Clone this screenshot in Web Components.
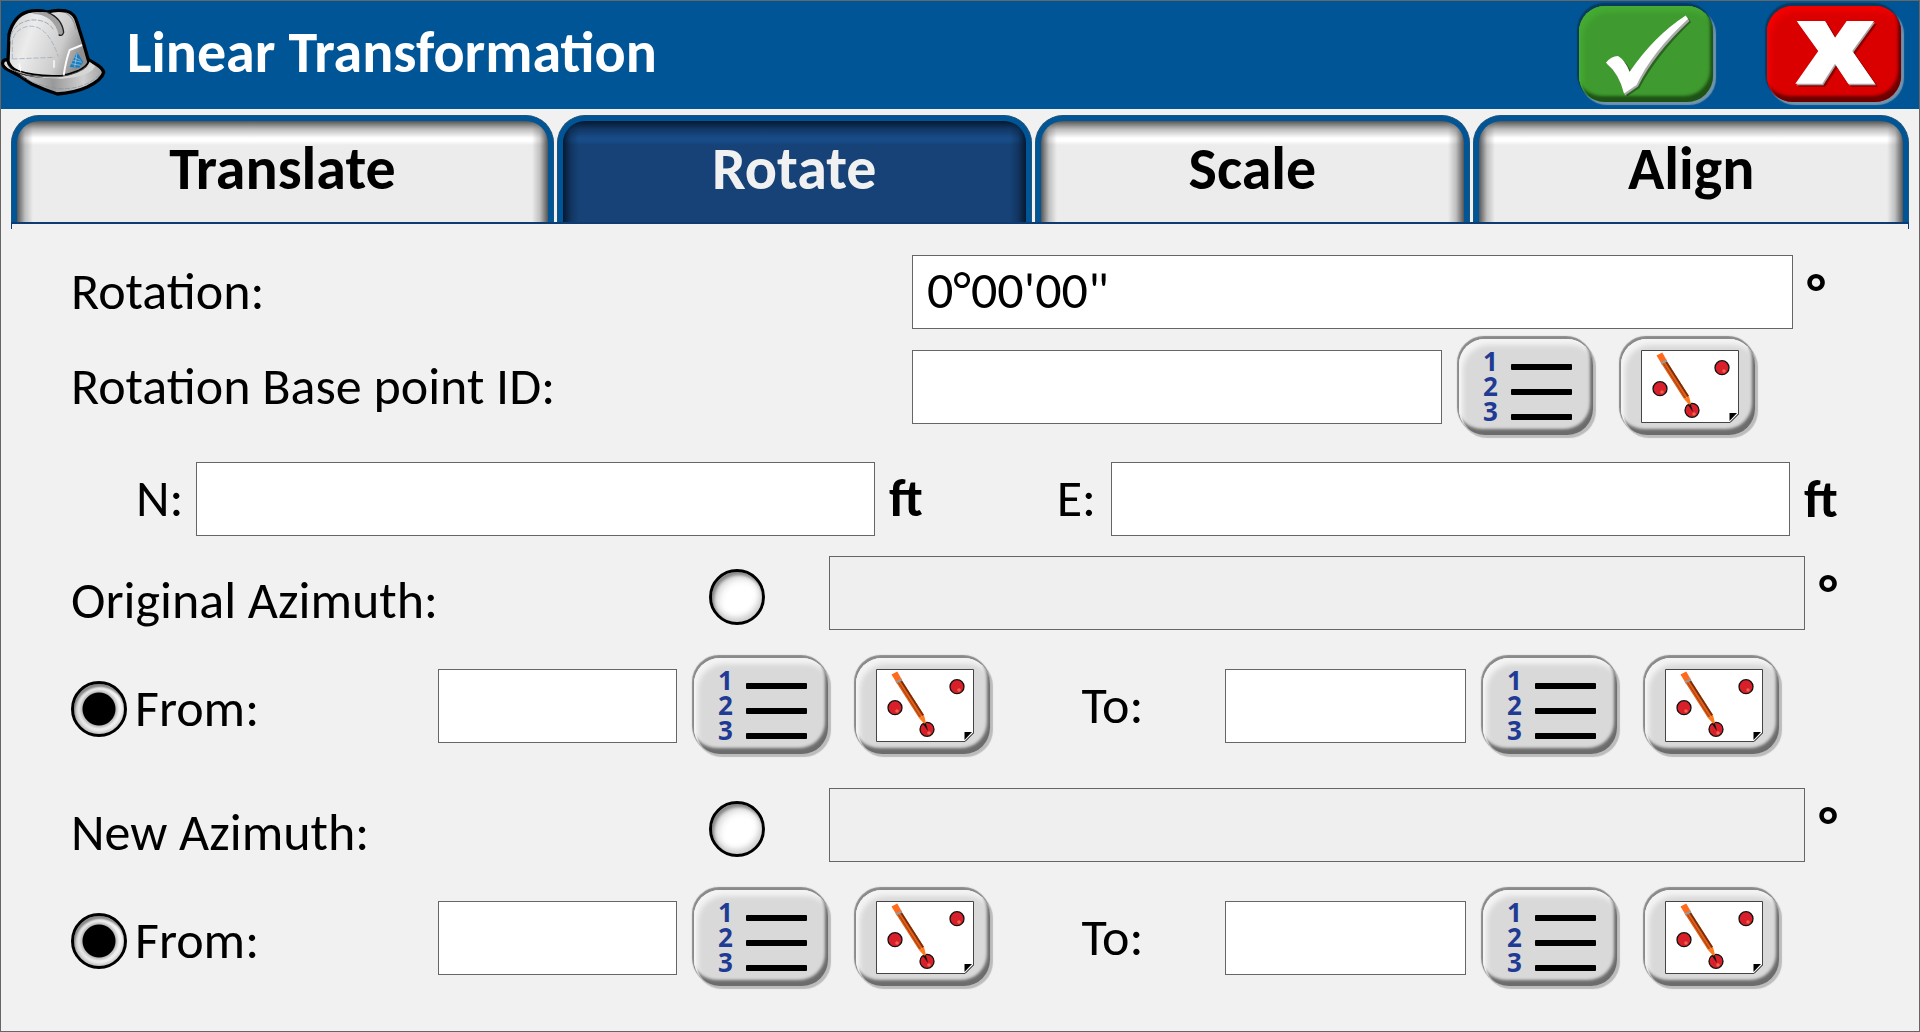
<!DOCTYPE html>
<html lang="en">
<head>
<meta charset="utf-8">
<title>Linear Transformation</title>
<style>
  html, body { margin: 0; }
  body { font-family: Carlito, Lato, sans-serif; color: #000; background: #f1f1f1; }
</style>
</head>
<body>
<app-window>
  <title-bar slot="header">Linear Transformation</title-bar>
  <tab-strip slot="tabs">
    <tab-item style="--grow:542">Translate</tab-item>
    <tab-item style="--grow:474" selected>Rotate</tab-item>
    <tab-item style="--grow:435">Scale</tab-item>
    <tab-item style="--grow:435">Align</tab-item>
  </tab-strip>
  <rotation-form></rotation-form>
</app-window>

<script>
const define = (name, html, setup) => {
  const template = document.createElement('template');
  template.innerHTML = html;
  customElements.define(name, class extends HTMLElement {
    constructor() {
      super();
      this.attachShadow({ mode: 'open' }).append(template.content.cloneNode(true));
    }
    connectedCallback() { if (setup) setup(this, this.shadowRoot); }
  });
};

const ICONS = {
  list: `<g font-family="Noto Sans" font-weight="bold" font-size="26" fill="#1f3b93">
      <text x="26" y="36">1</text><text x="26" y="61">2</text><text x="26" y="86">3</text></g>
    <g><rect x="54" y="29" width="61" height="6" rx="1"/><rect x="54" y="54" width="61" height="6" rx="1"/><rect x="54" y="79" width="61" height="6" rx="1"/></g>`,
  map: `<path d="M22.500 15.500H119.500V79L111 87.500H22.500Z" fill="#fff" stroke="#444"/>
    <path d="M110.500 78H118L110.500 86Z"/><path d="M119.500 79L111 87.500" stroke="#444" fill="none"/>
    <g fill="#d9202a" stroke="#111" stroke-width="1.300"><circle cx="41" cy="53.700" r="7"/><circle cx="103" cy="32.700" r="7"/><circle cx="73" cy="75.300" r="7"/></g>
    <g fill="#f0604a"><circle cx="43" cy="57" r="1.800"/><circle cx="105" cy="36" r="1.800"/><circle cx="75" cy="79" r="1.800"/></g>
    <path d="M42 28L47 25L70 61L65 64Z" fill="#e0601a"/>
    <path d="M45.500 26L47 25L70 61L68.500 62Z" fill="#7a2c08"/><path d="M43.500 27L66.500 63.500" stroke="#a8410c"/>
    <path d="M37.500 20.500L43.300 17.500L47.500 25L42 28Z" fill="#ff6a1c"/><path d="M42 28.500L48 25.500" stroke="#999" stroke-width="2"/>
    <path d="M65 64L70 61L73 73Z" fill="#ff7a1c"/><path d="M69 70L72 69L74 77Z" fill="#111"/>`,
  check: `<path d="M32 63Q37 57 44 57Q51 61 55.500 73Q78 38 111.700 16.500L114 20Q80 53 62.500 86L50 94.500Q45 74 32 63Z" opacity=".35"/>
    <path d="M30 62Q35 55.500 42 55.500Q49 60 53.500 71.500Q77 36 109.700 15L112.500 19Q77 52 61 84.500L48 93.500Q43 73 30 62Z" fill="#aaa"/>
    <path d="M29 60.700Q34 54 41 54Q48 58 52.500 70Q77 34 108.700 13.500L111 17Q75 50 59.500 83L47 91.500Q42 71 29 60.700Z" fill="#fff"/>`,
  cross: `<path transform="translate(3 3)" opacity=".35" d="M31.700 19H60L70 35.700L81.700 19H109L87.300 49L110 81.700H83.300L70 61.700L57.300 81.700H30.300L53.300 49Z"/>
    <path transform="translate(1 1.500)" fill="#a5a5a5" d="M31.700 19H60L70 35.700L81.700 19H109L87.300 49L110 81.700H83.300L70 61.700L57.300 81.700H30.300L53.300 49Z"/>
    <path fill="#fff" d="M31.700 19H60L70 35.700L81.700 19H109L87.300 49L110 81.700H83.300L70 61.700L57.300 81.700H30.300L53.300 49Z"/>`
};

define('app-window', `
  <style>
    :host { display: flex; flex-direction: column; box-sizing: border-box; min-height: 100vh; border: 1px solid #666; background: #f1f1f1; }
  </style>
  <slot name="header"></slot>
  <slot name="tabs"></slot>
  <slot></slot>`);

define('tool-button', `
  <style>
    :host { display: block; flex: none; width: 140px; height: 103px;
      --face: #d9d9d9; --light: #f3f3f3; --dark: #6c6c6c; --rim: #8a8a8a; --drop: #bcbcbc; }
    :host([tone=green]) { --face: #3f9b2f; --light: #44aa33; --dark: #1f5215; --rim: #083b5f; --drop: #6f93ad; }
    :host([tone=red]) { --face: #da0000; --light: #f00000; --dark: #6c0000; --rim: #083b5f; --drop: #6f93ad; }
    button { display: block; position: relative; width: 100%; height: 100%; padding: 0; border: 0; background: none; cursor: pointer; }
    button::before { content: ""; position: absolute; inset: 4px 4px 3px 2px; border-radius: 26px; background: var(--face);
      box-shadow: inset 2px 2px 1px var(--light), inset -3px -6px 3px var(--dark), inset 4px 6px 5px var(--light), -1px -2px 1px 1px var(--rim), 2px 2px 1px 1px var(--drop); }
    svg { display: block; position: relative; width: 140px; height: 103px; }
  </style>
  <button type="button"><svg viewBox="0 0 140 103" aria-hidden="true"></svg></button>`,
  (host, root) => {
    root.querySelector('svg').innerHTML = ICONS[host.getAttribute('icon')];
    root.querySelector('button').setAttribute('aria-label', host.getAttribute('label'));
  });

define('title-bar', `
  <style>
    :host { display: flex; align-items: center; height: 104px; padding: 0 14px 4px 0; background: #005596; color: #fff; }
    svg { flex: none; width: 106px; height: 90px; }
    h1 { flex: 1; margin: 0 0 0 20px; font-size: 58px; line-height: 64px; font-weight: bold; }
    .actions { display: flex; gap: 48px; }
  </style>
  <svg viewBox="3 25 318 270" aria-hidden="true">
    <defs>
      <linearGradient id="dome" x1="0" y1="0" x2="1" y2="0.300"><stop offset="0" stop-color="#c9c9c9"/><stop offset=".35" stop-color="#ececec"/><stop offset=".75" stop-color="#cccccc"/><stop offset="1" stop-color="#8e8e8e"/></linearGradient>
      <linearGradient id="brim" x1="0" y1="0" x2="1" y2="0"><stop offset="0" stop-color="#f2f2f2"/><stop offset=".5" stop-color="#999"/><stop offset=".8" stop-color="#d0d0d0"/><stop offset="1" stop-color="#a0a0a0"/></linearGradient>
    </defs>
    <path d="M22 180Q8 180 8 191Q9 203 24 210Q62 228 97 254Q135 272 172 283Q222 280 262 262Q306 240 311 218Q310 203 265 180Z" fill="url(#brim)" stroke="#000" stroke-width="10" stroke-linejoin="round"/>
    <path d="M24 184L27 104Q42 48 84 36Q112 29 143 37Q168 29 198 34Q224 40 231 68Q250 125 267 188Q262 202 235 216Q210 226 186 230Q105 234 52 215Q28 203 24 184Z" fill="url(#dome)" stroke="#000" stroke-width="10" stroke-linejoin="round"/>
    <path d="M17 186Q24 208 52 215Q105 234 186 230Q240 221 264 195L269 186L285 200Q270 232 186 237Q82 238 24 206L13 194Z" fill="#d6d6d6"/>
    <path d="M24 196Q40 226 110 229Q160 233 186 230Q240 221 262 199" fill="none" stroke="#333" stroke-width="2.500"/>
    <path d="M95 43Q160 42 176 105Q184 113 190 94Q187 60 152 40Q120 33 95 43Z" fill="#a2a2a2"/>
    <path d="M143 38Q186 56 191 98Q186 112 176 105" fill="none" stroke="#222" stroke-width="4"/>
    <path d="M198 40Q222 52 228 90" fill="none" stroke="#999" stroke-width="4"/>
    <path d="M31 126Q32 72 92 61Q140 58 160 89" fill="none" stroke="#9aabbb" stroke-width="3" stroke-dasharray="15 5"/>
    <path d="M37 178V124Q45 88 84 80Q142 73 175 171M37 178L164 173" fill="none" stroke="#8fa4b8" stroke-width="2" stroke-dasharray="16 5"/>
    <path d="M58 192L62 215M162 182V204" fill="none" stroke="#fff" stroke-width="4"/>
    <path d="M191 227Q198 180 209 151L246 136" fill="none" stroke="#fafafa" stroke-width="6"/>
    <path d="M231 158L209 202L238 204L250 187Z" fill="#1b7dc0"/><path d="M224 173L242 182M219 182L246 188M214 192L242 197M231 160L224 202" stroke="#d8e6ef" stroke-width="1.500"/>
    <path d="M62 227Q105 258 177 267Q255 270 300 224" fill="none" stroke="#7f93a7" stroke-width="2" stroke-dasharray="16 4"/>
  </svg>
  <h1><slot></slot></h1>
  <div class="actions">
    <tool-button tone="green" icon="check" label="Accept"></tool-button>
    <tool-button tone="red" icon="cross" label="Cancel"></tool-button>
  </div>`);

define('tab-strip', `
  <style>
    :host { display: block; padding: 6px 10px 0; }
    div { display: flex; gap: 3px; height: 107px; }
    hr { box-sizing: border-box; height: 7px; margin: 0; border: 1px solid #0e3c72; border-top-width: 2px; border-bottom: 0; }
  </style>
  <div role="tablist"><slot></slot></div>
  <hr>`);

define('tab-item', `
  <style>
    :host { display: block; flex: var(--grow) 1 0; min-width: 0; }
    button { box-sizing: border-box; width: 100%; height: 107px; padding: 0; border: 1px solid #1f5478; border-bottom: 0; border-radius: 28px 28px 0 0;
      background: #005596; font: bold 60px/64px Carlito, Lato, sans-serif; color: #000; }
    span { box-sizing: border-box; display: flex; align-items: center; justify-content: center; height: 101px; margin: 5px 5px 0; padding-bottom: 6px; border-radius: 22px 22px 0 0;
      --edge: 85,85,85; --glow: #fff; --face: #ececec;
      overflow: hidden;
      background: linear-gradient(90deg, rgb(var(--edge)), rgba(var(--edge),.3) 8px, rgba(var(--edge),0) 16px, rgba(var(--edge),0) calc(100% - 16px), rgba(var(--edge),.3) calc(100% - 8px), rgb(var(--edge))),
        linear-gradient(rgb(var(--edge)), rgba(var(--edge),.4) 8px, rgba(var(--edge),0) 17px),
        linear-gradient(var(--glow) 20px, var(--face) 24px); }
    :host([selected]) button { color: #f1f1f1; }
    :host([selected]) span { --edge: 6,24,48; --glow: #184c88; --face: #164277; }
  </style>
  <button type="button" role="tab"><span><slot></slot></span></button>`,
  (host, root) => root.querySelector('button').setAttribute('aria-selected', host.hasAttribute('selected')));

const FORM_STYLE = `
  .row { display: grid; align-items: center; }
  label { padding-bottom: 2px; font-size: 52px; line-height: 60px; white-space: nowrap; }
  input[type=text] { box-sizing: border-box; width: 100%; min-width: 0; height: 74px; margin: 0; padding: 0 14px 4px; border: 1px solid #666; border-radius: 0;
    background: #fff; font: 52px/60px Carlito, Lato, sans-serif; color: #000; }
  input[type=text]:disabled { background: #efefef; }
  .unit { padding-left: 14px; font-size: 53px; line-height: 60px; font-weight: bold; }
  .tools { display: flex; gap: 22px; padding-left: 15px; }`;

define('azimuth-group', `
  <style>
    :host { display: block; }
    ${FORM_STYLE}
    .value { grid-template-columns: 638fr 120px 977fr 114px; margin-bottom: 24px; }
    .value label { padding: 14px 0 0; }
    .points { grid-template-columns: 367fr 240fr 404px 144fr 241fr 453px; }
    .from { display: flex; align-items: center; gap: 8px; padding-top: 6px; }
    input[type=radio] { appearance: none; box-sizing: border-box; flex: none; width: 56px; height: 56px; margin: 0; border: 3px solid #000; border-radius: 50%;
      background: #fff; box-shadow: inset 2px 3px 3px #888, inset 5px 5px 8px #ccc, inset -2px -4px 6px #ccc; }
    input[type=radio]:checked { background: radial-gradient(circle, #000 16px, #bbb 17px, #eee 20px, #fff 24px);
      box-shadow: inset 1px 3px 2px #888, inset 3px 0 4px #bbb, inset -1px -2px 3px #ccc; }
    .value input[type=radio] { margin-top: 8px; }
  </style>
  <div class="row value">
    <label for="direct"></label>
    <input type="radio" id="direct" name="mode">
    <input type="text" id="value" disabled aria-label="Azimuth">
    <span class="unit">°</span>
  </div>
  <div class="row points">
    <span class="from"><input type="radio" id="by-points" name="mode" checked><label for="by-points">From:</label></span>
    <input type="text" aria-label="From point">
    <span class="tools"><tool-button icon="list" label="Pick from list"></tool-button><tool-button icon="map" label="Pick from map"></tool-button></span>
    <label for="to">To:</label>
    <input type="text" id="to">
    <span class="tools"><tool-button icon="list" label="Pick from list"></tool-button><tool-button icon="map" label="Pick from map"></tool-button></span>
  </div>`,
  (host, root) => { root.querySelector('label').textContent = host.getAttribute('caption'); });

define('rotation-form', `
  <style>
    :host { display: block; padding: 26px 0 0 70px; }
    ${FORM_STYLE}
    .angle { grid-template-columns: 841fr 881fr 126px; margin-bottom: 6px; }
    .base { grid-template-columns: 841fr 530fr 477px; margin-bottom: 24px; }
    .coords { grid-template-columns: 60px 679fr 236px 679fr 129px; margin: 0 0 20px 65px; }
    .east { display: flex; justify-content: space-between; padding-right: 15px; }
    azimuth-group + azimuth-group { margin-top: 31px; }
  </style>
  <div class="row angle">
    <label for="rotation">Rotation:</label>
    <input type="text" id="rotation" value="0°00'00&quot;">
    <span class="unit">°</span>
  </div>
  <div class="row base">
    <label for="base">Rotation Base point ID:</label>
    <input type="text" id="base">
    <span class="tools"><tool-button icon="list" label="Pick from list"></tool-button><tool-button icon="map" label="Pick from map"></tool-button></span>
  </div>
  <div class="row coords">
    <label for="n">N:</label>
    <input type="text" id="n">
    <span class="east"><span class="unit">ft</span><label for="e">E:</label></span>
    <input type="text" id="e">
    <span class="unit">ft</span>
  </div>
  <azimuth-group caption="Original Azimuth:"></azimuth-group>
  <azimuth-group caption="New Azimuth:"></azimuth-group>`);
</script>
</body>
</html>
